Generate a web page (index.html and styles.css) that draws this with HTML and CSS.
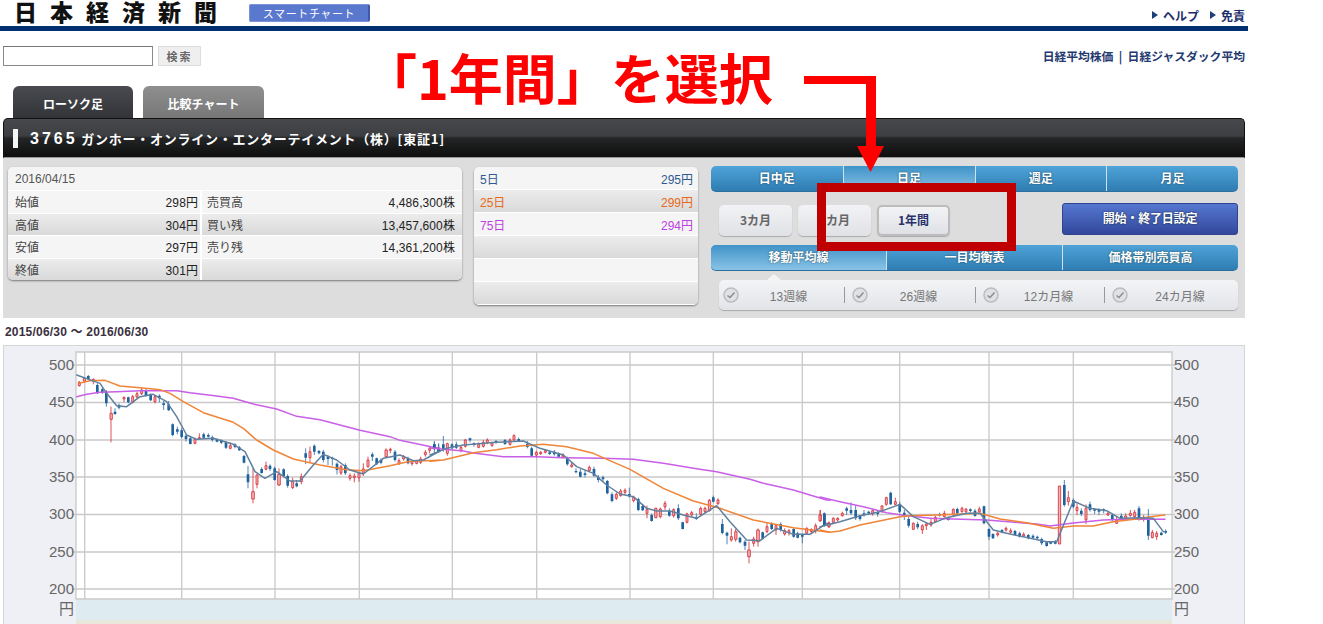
FILE: index.html
```html
<!DOCTYPE html>
<html lang="ja">
<head>
<meta charset="utf-8">
<title>スマートチャート</title>
<link rel="stylesheet" href="styles.css">
</head>
<body>
<div class="page">
  <header class="top">
    <div class="brand">
      <span class="logo">日本経済新聞</span>
      <span class="smart">スマートチャート</span>
    </div>
    <nav class="help"><span class="tri"></span>ヘルプ<span class="tri t2"></span>免責</nav>
  </header>
  <div class="rule"></div>

  <div class="search-row">
    <div class="search">
      <input class="box" type="text" aria-label="検索">
      <button class="go" type="button">検索</button>
    </div>
    <div class="links">日経平均株価 &nbsp;|&nbsp; 日経ジャスダック平均</div>
  </div>

  <div class="tabs">
    <div class="tab on">ローソク足</div>
    <div class="tab off">比較チャート</div>
  </div>

  <div class="titlebar"><span class="mark"></span><span class="name"><b class="code">3765</b> ガンホー・オンライン・エンターテイメント（株）[東証1]</span></div>

  <section class="panel">
    <div class="card quotes">
      <div class="q head"><span class="date">2016/04/15</span></div>
      <div class="q"><div class="c1"><span>始値</span><span class="num">298円</span></div><div class="c2"><span>売買高</span><span class="num">4,486,300株</span></div></div>
      <div class="q alt"><div class="c1"><span>高値</span><span class="num">304円</span></div><div class="c2"><span>買い残</span><span class="num">13,457,600株</span></div></div>
      <div class="q"><div class="c1"><span>安値</span><span class="num">297円</span></div><div class="c2"><span>売り残</span><span class="num">14,361,200株</span></div></div>
      <div class="q alt"><div class="c1"><span>終値</span><span class="num">301円</span></div><div class="c2"></div></div>
    </div>

    <div class="card averages">
      <div class="a ma5"><span>5日</span><span>295円</span></div>
      <div class="a alt ma25"><span>25日</span><span>299円</span></div>
      <div class="a ma75"><span>75日</span><span>294円</span></div>
      <div class="a alt"></div>
      <div class="a"></div>
      <div class="a alt"></div>
    </div>

    <div class="controls">
      <div class="seg s4">
        <span>日中足</span><span class="sel">日足</span><span>週足</span><span>月足</span>
      </div>
      <div class="range">
        <span class="rb">3カ月</span><span class="rb">6カ月</span><span class="rb cur">1年間</span>
        <span class="setdate">開始・終了日設定</span>
      </div>
      <div class="seg s3">
        <span class="sel">移動平均線</span><span>一目均衡表</span><span>価格帯別売買高</span>
      </div>
      <div class="checks">
        <div class="chk"><svg class="tick" viewBox="0 0 16 16"><circle cx="8" cy="8" r="7"/><path d="M4.5 8.5l2.5 2 4.500-5"/></svg><span>13週線</span></div>
        <div class="chk"><svg class="tick" viewBox="0 0 16 16"><circle cx="8" cy="8" r="7"/><path d="M4.5 8.5l2.5 2 4.500-5"/></svg><span>26週線</span></div>
        <div class="chk"><svg class="tick" viewBox="0 0 16 16"><circle cx="8" cy="8" r="7"/><path d="M4.5 8.5l2.5 2 4.500-5"/></svg><span>12カ月線</span></div>
        <div class="chk"><svg class="tick" viewBox="0 0 16 16"><circle cx="8" cy="8" r="7"/><path d="M4.5 8.5l2.5 2 4.500-5"/></svg><span>24カ月線</span></div>
      </div>
    </div>
  </section>

  <div class="period">2015/06/30 ～ 2016/06/30</div>

  <section class="chart">
    <svg class="plot" viewBox="4 346 1240 278" width="1240" height="278">
      <rect class="bg" x="76" y="352" width="1096" height="247"/>
      <rect class="band1" x="76" y="600" width="1096" height="20"/>
      <rect class="band2" x="76" y="620" width="1096" height="4"/>
      <path class="grid" d="M76 352H1172V599H76Z"/>
      <path class="grid" d="M72 365H1175M72 402.500H1175M72 440H1175M72 477H1175M72 514.500H1175M72 552H1175M72 589H1175"/>
      <path class="grid" d="M84.700 352V599M181.700 352V599M275 352V599M359.300 352V599M452.300 352V599M536.700 352V599M630 352V599M713.300 352V599M802.300 352V599M899.700 352V599M989 352V599M1073.300 352V599"/>

      <g class="axis">
        <text x="74" y="370">500</text><text x="74" y="407">450</text><text x="74" y="445">400</text><text x="74" y="482">350</text><text x="74" y="519">300</text><text x="74" y="557">250</text><text x="74" y="594">200</text><text x="74" y="614">円</text>
      </g>
      <g class="axis right">
        <text x="1174" y="370">500</text><text x="1174" y="407">450</text><text x="1174" y="445">400</text><text x="1174" y="482">350</text><text x="1174" y="519">300</text><text x="1174" y="557">250</text><text x="1174" y="594">200</text><text x="1174" y="614">円</text>
      </g>

      <g transform="translate(0 345) scale(.33333)">
        <path class="bw" d="M265 90V104M292 115V147M307 128V147M319 135V185M345 190V210M357 175V193M385 155V175M438 130V155M452 145V168M478 148V172M491 168V195M506 168V198M518 235V274M532 245V268M545 250V280M558 268V290M571 275V298M611 263V280M625 265V278M637 272V290M651 280V292M664 283V297M678 288V312M705 295V310M718 303V318M732 330V355M744 363V430M785 367V386M810 358V378M824 365V407M851 370V397M863 388V428M890 405V427M917 310V357M943 298V330M957 315V328M970 315V352M984 330V360M997 335V362M1011 352V388M1036 355V390M1117 322V348M1130 338V360M1143 340V358M1185 315V350M1224 335V358M1303 290V315M1316 295V322"/>
        <path class="bb" d="M265 93V102M292 120V145M307 133V143M319 142V175M345 200V207M357 180V188M385 157V172M438 135V152M452 147V166M478 152V160M491 175V180M506 178V196M518 238V270M532 253V260M545 256V276M558 272V282M571 280V297M611 268V278M625 270V275M637 277V285M651 283V290M664 285V293M678 292V308M705 298V306M718 307V316M732 333V353M744 388V412M785 372V384M810 362V372M824 370V405M851 373V393M863 393V422M890 415V424M917 325V338M943 302V320M957 318V325M970 320V345M984 335V342M997 338V342M1011 356V375M1036 360V385M1117 328V335M1130 340V358M1143 345V353M1185 320V345M1224 340V355M1303 298V308M1316 310V320"/>
        <path class="rw" d="M238 108V125M253 97V112M280 100V118M333 185V292M372 155V172M398 150V175M411 140V160M425 130V150M465 150V175M585 278V298M598 265V283M691 292V313M759 370V475M771 388V430M798 350V376M837 370V423M878 398V432M904 385V418M930 305V352M1023 360V390M1050 385V407M1063 385V412M1077 380V410M1090 355V393M1104 335V368M1158 310V338M1171 308V325M1197 340V360M1211 330V347M1236 345V362M1250 345V358M1262 335V357M1276 315V335M1289 305V325"/>
        <path class="rb-c" d="M235 112h6v10h-6zM250 100h6v8h-6zM277 103h6v5h-6zM330 205h7v18h-7zM369 157h6v5h-6zM395 155h6v17h-6zM408 146h6v10h-6zM422 135h6v11h-6zM462 155h6v15h-6zM582 283h6v12h-6zM595 278h6v4h-6zM688 302h6v8h-6zM755 440h8v22h-8zM768 390h6v28h-6zM795 362h6v11h-6zM833 388h8v32h-8zM875 410h6v18h-6zM901 395h6v15h-6zM927 320h6v18h-6zM1020 365h6v19h-6zM1047 392h6v8h-6zM1060 393h6v5h-6zM1074 385h6v13h-6zM1087 372h6v13h-6zM1101 345h6v20h-6zM1155 315h7v20h-7zM1168 313h6v3h-6zM1194 347h6v9h-6zM1208 335h6v7h-6zM1233 350h6v6h-6zM1247 348h6v7h-6zM1259 342h6v10h-6zM1273 322h6v7h-6zM1286 310h6v6h-6z"/>
        <polyline class="l-p" points="230,155 260,148 300,142 350,140 420,137 530,137 570,143 650,153 700,160 760,177 830,192 890,214 960,224 1040,245 1080,256 1170,275 1200,286 1300,307 1320,310"/>
        <polyline class="l-o" points="238,115 270,107 315,106 360,123 420,128 480,134 510,145 550,170 610,203 700,232 730,250 770,285 820,315 880,342 960,360 1040,374 1090,377 1170,362 1230,349 1320,346"/>
        <polyline class="l-b" points="230,90 300,115 320,145 350,182 380,185 420,155 460,148 500,170 530,215 560,270 590,283 640,280 700,298 735,320 765,380 795,400 830,380 870,408 900,408 940,360 970,328 1010,345 1050,375 1090,387 1150,340 1200,330 1240,347 1270,345 1320,318"/>
      </g>

      <g transform="translate(430 345) scale(.33333)">
        <path class="bw" d="M13 288V325M26 298V322M40 273V320M66 295V315M79 290V312M120 278V292M132 292V305M198 285V296M225 282V300M266 278V290M292 288V310M305 305V335M359 318V330M373 315V332M386 322V337M412 335V362M438 370V385M451 372V397M465 375V397M492 365V395M505 390V412M519 392V410M532 405V448M546 442V472M598 428V458M625 458V498M638 478V498M665 505V530M718 490V515M745 478V525M758 530V553M799 505V525M850 452V472M877 522V568M891 560V598M930 575V595M945 585V615M998 560V585M1025 532V555M1052 532V560M1091 548V578M1103 560V580M1117 568V595M1183 503V540"/>
        <path class="bb" d="M13 298V308M26 310V318M40 298V312M66 298V310M79 298V308M120 280V286M132 295V300M198 288V294M225 285V297M266 282V288M292 296V306M305 310V332M359 322V327M373 320V328M386 326V335M412 340V358M438 378V382M451 380V395M465 385V390M492 372V392M505 397V405M519 397V403M532 408V445M546 448V468M598 447V454M625 462V495M638 483V496M665 510V528M718 497V512M745 490V520M758 532V552M799 517V522M850 457V470M877 537V564M891 563V572M930 578V592M945 590V602M998 562V582M1025 537V552M1052 537V555M1091 552V575M1103 565V578M1117 570V575M1183 505V535"/>
        <path class="rw" d="M52 293V332M93 303V322M106 282V308M146 292V310M160 285V308M172 280V298M186 290V305M240 280V302M252 268V290M319 318V338M332 318V330M346 312V325M399 325V340M425 352V368M478 362V380M559 442V465M572 432V455M585 430V450M611 452V472M651 482V520M678 488V520M691 488V520M705 468V495M731 490V518M771 503V535M785 498V515M812 485V512M825 485V505M838 462V500M864 460V480M904 550V590M917 552V590M957 590V655M971 575V605M984 550V605M1011 532V565M1038 537V570M1064 550V572M1077 552V572M1130 547V570M1144 550V565M1157 535V565M1171 495V530M1197 530V548"/>
        <path class="rb-c" d="M49 296h6v29h-6zM90 307h6v10h-6zM103 285h6v19h-6zM143 298h6v9h-6zM157 292h6v12h-6zM169 285h6v7h-6zM183 293h6v9h-6zM237 285h6v13h-6zM249 272h6v13h-6zM316 322h6v8h-6zM329 322h6v4h-6zM343 317h6v5h-6zM396 330h6v6h-6zM422 360h6v5h-6zM475 367h6v10h-6zM556 448h6v12h-6zM569 438h6v14h-6zM582 436h6v6h-6zM608 457h6v10h-6zM648 493h6v12h-6zM674 490h7v28h-7zM688 492h6v23h-6zM702 475h6v11h-6zM728 494h6v18h-6zM768 507h6v25h-6zM782 503h6v7h-6zM809 490h6v18h-6zM822 490h6v10h-6zM835 466h7v31h-7zM861 465h6v11h-6zM901 575h6v10h-6zM914 560h7v23h-7zM953 615h8v20h-8zM968 582h6v13h-6zM980 555h8v35h-8zM1008 545h6v15h-6zM1035 542h6v13h-6zM1061 557h6v10h-6zM1074 557h6v6h-6zM1127 550h6v15h-6zM1141 553h6v7h-6zM1154 542h6v15h-6zM1168 510h6v17h-6zM1194 535h6v10h-6z"/>
        <polyline class="l-p" points="0,309 100,318 130,324 220,335 320,335 400,338 520,340 610,343 700,355 800,371 860,380 960,403 1000,415 1090,435 1190,465 1200,466"/>
        <polyline class="l-o" points="0,349 40,345 90,333 130,323 200,314 270,303 340,298 410,305 490,325 600,373 700,430 790,468 870,490 970,525 1090,548 1200,562"/>
        <polyline class="l-b" points="0,330 50,310 100,300 200,292 280,288 330,310 400,330 440,365 490,385 530,420 570,447 610,455 650,490 680,498 720,498 760,510 800,520 860,482 900,530 950,585 990,587 1040,550 1090,568 1140,568 1190,535 1200,538"/>
      </g>

      <g transform="translate(820 345) scale(.33333)">
        <path class="bw" d="M13 503V545M80 485V510M93 472V510M107 483V525M120 510V527M132 495V515M146 497V510M173 498V515M212 440V480M239 470V505M253 495V525M266 515V548M293 530V553M359 503V515M385 515V527M412 488V510M451 490V503M465 492V515M492 482V538M507 550V585M519 565V582M546 552V565M585 555V572M599 560V578M625 567V583M639 568V580M652 572V583M665 578V600M680 588V605M692 588V598M706 585V598M733 405V485M760 460V490M784 490V513M810 470V500M824 490V507M837 490V510M851 490V505M877 505V530M904 505V525M957 483V527M985 492V585M1024 560V572M1037 553V567"/>
        <path class="bb" d="M13 507V540M80 490V497M93 495V505M107 495V520M120 513V522M132 505V510M146 500V505M173 502V507M212 443V478M239 477V500M253 503V515M266 522V542M293 537V547M359 507V511M385 520V525M412 492V505M451 493V498M465 497V513M492 484V535M507 552V575M519 567V580M546 555V562M585 558V570M599 565V575M625 570V580M639 572V578M652 575V580M665 582V595M680 592V603M692 590V596M706 590V596M733 420V480M760 465V485M784 497V507M810 478V495M824 492V497M837 493V500M851 493V498M877 510V525M904 512V520M957 490V525M985 520V572M1024 563V570M1037 558V563"/>
        <path class="rw" d="M0 495V530M27 530V548M40 517V537M53 517V530M67 500V515M158 493V512M186 480V503M199 455V482M226 458V480M280 532V555M307 538V567M319 533V555M333 518V545M346 512V532M373 497V518M400 490V513M426 485V503M438 490V505M478 485V503M533 560V575M558 545V560M572 550V565M611 562V575M745 438V482M771 475V510M798 478V537M864 500V513M890 515V537M917 505V527M931 495V515M944 495V518M971 510V530M997 555V580M1010 558V585"/>
        <path class="rb-c" d="M-3 510h6v17h-6zM24 535h6v10h-6zM37 520h6v12h-6zM50 520h6v5h-6zM64 505h6v7h-6zM155 497h6v10h-6zM183 483h6v17h-6zM196 458h6v20h-6zM223 470h6v8h-6zM277 535h6v18h-6zM304 542h6v13h-6zM316 537h6v5h-6zM330 532h6v8h-6zM343 517h6v13h-6zM370 505h6v10h-6zM397 493h6v17h-6zM423 490h6v10h-6zM435 492h6v8h-6zM475 492h6v8h-6zM530 565h6v5h-6zM555 550h6v5h-6zM569 557h6v5h-6zM608 568h6v5h-6zM715 423h7v174h-7zM742 458h6v12h-6zM768 487h6v10h-6zM795 490h6v35h-6zM861 505h6v5h-6zM887 525h6v10h-6zM914 513h6v10h-6zM928 505h6v7h-6zM941 502h6v13h-6zM968 517h6v6h-6zM994 562h6v16h-6zM1007 565h6v10h-6z"/>
        <polyline class="l-p" points="0,456 60,470 130,485 200,503 250,511 330,520 400,522 500,525 600,533 650,537 690,543 760,534 850,525 950,522 1035,523"/>
        <polyline class="l-o" points="0,555 30,562 60,558 120,540 240,515 270,512 350,510 480,505 540,522 620,533 700,550 760,543 820,543 880,530 950,522 985,516 1035,510"/>
        <polyline class="l-b" points="0,545 60,530 120,512 180,500 240,478 280,515 330,538 380,518 440,505 480,505 520,555 560,565 680,590 710,590 760,468 810,490 860,497 900,520 960,518 1000,520 1030,560"/>
      </g>
    </svg>
  </section>
</div>

<div class="callout">「1年間」を選択</div>
<svg class="pointer" viewBox="0 0 1323 624" width="1323" height="624" aria-hidden="true">
  <path class="arrow" d="M804 76H876V146H884L870.500 172 857 146H866V84H804Z"/>
  <rect class="frame" x="821.500" y="187.500" width="190" height="59"/>
</svg>
</body>
</html>
```

FILE: styles.css
```css
* { box-sizing: border-box; }
html, body { margin: 0; height: 624px; overflow: hidden; background: #fff; }
body { font-family: "Liberation Sans", "Noto Sans CJK JP", sans-serif; font-size: 12px; color: #444; position: relative; }
.page { width: 1248px; }

.top { height: 26px; display: flex; justify-content: space-between; }
.brand { display: flex; align-items: flex-start; }
.logo { width: 249px; height: 27px; padding-left: 14px; font-family: "Liberation Sans", "Noto Sans CJK JP", sans-serif; font-weight: 900; font-size: 23px; line-height: 27px; color: #111; letter-spacing: 13px; white-space: nowrap; }
.smart { margin-top: 4px; width: 121px; height: 18px; background: #5b78cf; border: 1px solid #7d93d8; border-right: 2px solid #3f5aa8; border-radius: 2px; color: #fff; font: 11px/16px "Noto Sans CJK JP", sans-serif; text-align: center; letter-spacing: .6px; }
.help { display: flex; align-items: center; padding: 4px 3px 0 0; height: 26px; font: 700 12px "Noto Sans CJK JP", sans-serif; color: #1c2f6a; }
.tri { width: 0; height: 0; border-left: 6px solid #1c3f78; border-top: 4px solid transparent; border-bottom: 4px solid transparent; margin-right: 5px; }
.t2 { margin-left: 11px; }
.rule { height: 5px; background: #003070; }

.search-row { display: flex; justify-content: space-between; margin-top: 15px; height: 20px; padding: 0 3px; }
.search { display: flex; gap: 5px; }
.box { width: 150px; height: 20px; border: 1px solid #8a8a8a; border-top-color: #777; background: #fff; padding: 0; }
.go { width: 43px; height: 20px; padding: 0; background: #efefef; border: 1px solid #ddd; color: #666; font: 700 11px "Noto Sans CJK JP", sans-serif; letter-spacing: 2px; }
.links { padding-top: 3px; font: 700 11.800px/14px "Noto Sans CJK JP", sans-serif; color: #24396f; }

.tabs { display: flex; gap: 10px; margin-top: 20px; padding-left: 13px; height: 32px; }
.tab { width: 121px; height: 32px; border-radius: 6px 6px 0 0; color: #fff; font: 700 12px/35px "Noto Sans CJK JP", sans-serif; text-align: center; }
.on { width: 120px; background: linear-gradient(#4a4b50, #333438); }
.off { background: linear-gradient(#8f8f8f, #777); }

.titlebar { margin-left: 3px; width: 1242px; height: 40px; display: flex; align-items: center; padding-left: 9px; border-radius: 5px 5px 0 0; background: linear-gradient(#48494d 0, #3c3e41 45%, #242527 50%, #0e0e0e 100%); border: 1px solid #111; border-bottom: 1px solid #999; }
.mark { width: 5px; height: 19px; background: #f5f5f5; margin-right: 12px; }
.name { font: 700 13px "Noto Sans CJK JP", sans-serif; color: #fff; letter-spacing: .75px; white-space: nowrap; }
.code { font: 700 16px "Liberation Sans", sans-serif; letter-spacing: 3px; }

.panel { margin-left: 3px; width: 1242px; height: 160px; background: #dcdddc; display: flex; align-items: flex-start; padding: 9px 0 0 5px; }
.card { border-radius: 5px; overflow: hidden; box-shadow: 0 1px 2px #777; background: #f5f5f5; }
.quotes { width: 454px; height: 113px; }
.averages { width: 224px; margin-left: 12px; height: 138px; }
.q { height: 22.500px; display: flex; border-bottom: 1px solid #fff; background: #f5f5f5; }
.q.head { height: 24px; align-items: center; padding-left: 7px; }
.date { color: #555; }
.alt { background: linear-gradient(#ececec, #d9d9d9); }
.c1, .c2 { display: flex; justify-content: space-between; align-items: center; }
.c1 { width: 194px; padding: 0 2px 0 7px; border-right: 2px solid #fff; }
.c2 { flex: 1; padding: 0 7px 0 5px; }
.num { color: #222; letter-spacing: .1px; }
.a { height: 23px; display: flex; justify-content: space-between; align-items: center; padding: 0 5px 0 6px; border-bottom: 1px solid #fff; background: #f5f5f5; }
.a.alt { background: linear-gradient(#ececec, #d9d9d9); }
.ma5 { color: #2f5a90; }
.ma25 { color: #e8691a; }
.ma75 { color: #bf3fe0; }

.controls { width: 527px; margin-left: 13px; margin-top: -1px; }
.seg { height: 26px; display: flex; border-radius: 5px; overflow: hidden; background: linear-gradient(#4ea3d8, #2f7db2); border-bottom: 1px solid #2b6f9e; }
.seg span { display: flex; align-items: center; justify-content: center; padding-bottom: 2px; color: #fff; font: 700 12px "Noto Sans CJK JP", sans-serif; text-shadow: 0 0 2px #245; border-left: 1px solid #cfe3ef; }
.seg span:first-child { border-left: 0; }
.seg .sel { background: linear-gradient(#3f93c8, #8ac3e6); }
.s4 span { width: 25%; }
.s3 span { flex: 1; }
.range { height: 53px; display: flex; align-items: flex-start; padding: 11px 0 0 8px; gap: 6px; }
.rb { width: 73px; height: 31px; margin-top: 2px; background: linear-gradient(#f2f3f5, #dfe1e5); border-radius: 5px; box-shadow: 0 1px 1px #aaa; color: #666; font: 700 12px/29px "Noto Sans CJK JP", sans-serif; text-align: center; }
.rb.cur { border: 2px solid #bcbcbc; color: #27306b; line-height: 25px; }
.setdate { margin-left: auto; width: 176px; height: 32px; background: linear-gradient(#5577d0, #33479c); border-radius: 3px; border: 1px solid #2f4390; color: #fff; font: 700 12px/28px "Noto Sans CJK JP", sans-serif; letter-spacing: -.2px; text-align: center; text-shadow: 0 0 2px #123; }
.checks { position: relative; margin: 9px 0 0 8px; width: 519px; height: 30px; display: grid; grid-template-columns: 125px 131px 129px 1fr; background: linear-gradient(#f3f4f6, #e2e4e8); border-radius: 5px; box-shadow: 0 1px 1px #aaa; }
.checks::before { content: ""; position: absolute; left: 48px; top: -6px; border: solid transparent; border-width: 0 7px 6px; border-bottom-color: #f3f4f6; }
.chk { display: flex; align-items: center; padding-left: 4px; color: #777; position: relative; }
.chk span { flex: 1; text-align: center; padding-right: 6px; }
.chk + .chk::before { content: ""; position: absolute; left: 0; top: 7px; height: 16px; border-left: 1px solid #999; }
.chk + .chk { padding-left: 8px; }
.tick { width: 16px; height: 16px; fill: #dfe1e4; stroke: #b9bcc0; stroke-width: 1.500; }
.tick path { fill: none; stroke: #8a8d91; }

.period { height: 27px; padding-left: 5px; font: 700 12px/28px "Liberation Sans", "Noto Sans CJK JP", sans-serif; letter-spacing: .2px; color: #3a3040; }

.chart { margin-left: 3px; width: 1242px; height: 279px; background: #eff0f5; border: 1px solid #d5d5d5; border-bottom: 0; }
.plot { display: block; }
.bg { fill: #fff; }
.band1 { fill: #deebf1; }
.band2 { fill: #e8e8da; }
.grid { fill: none; stroke: #c9c9c9; stroke-width: 1.300; }
.axis text { fill: #666; font: 15px "Liberation Sans", "Noto Sans CJK JP", sans-serif; text-anchor: end; }
.axis.right text { text-anchor: start; }
.bw { fill: none; stroke: #2e6ea6; stroke-width: 2.500; }
.bb { fill: none; stroke: #1f639e; stroke-width: 8; }
.rw { fill: none; stroke: #d62f37; stroke-width: 2.500; }
.rb-c { fill: #f2b4b7; stroke: #d62f37; stroke-width: 2.500; }
.l-p, .l-o, .l-b { fill: none; stroke-linejoin: round; stroke-linecap: round; stroke-width: 4.500; }
.l-p { stroke: #c95fe6; }
.l-o { stroke: #f08437; }
.l-b { stroke: #60809f; }

.callout { position: absolute; left: 363px; top: 41px; font: 700 54px/72px "Noto Sans CJK JP", sans-serif; color: #f00; white-space: nowrap; }
.pointer { position: absolute; left: 0; top: 0; pointer-events: none; }
.arrow { fill: #f00; }
.frame { fill: none; stroke: #c00000; stroke-width: 9; }
```
